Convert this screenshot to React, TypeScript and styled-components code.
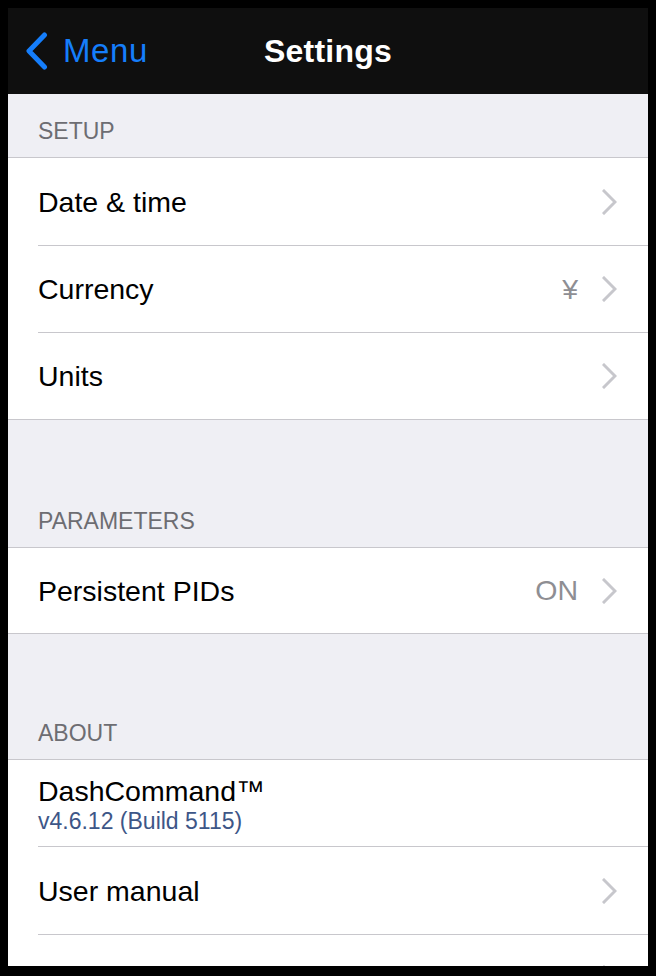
import React from "react";
import styled, { createGlobalStyle } from "styled-components";

const GlobalStyle = createGlobalStyle`
  html, body { background: #000; }
  body { margin: 8px; font-family: "Liberation Sans", Arial, sans-serif; }
`;

const Screen = styled.div`
  width: 640px;
  height: 958px;
  overflow: hidden;
  background: #efeff4;
  display: flex;
  flex-direction: column;
`;

const NavBar = styled.header`
  height: 86px;
  flex: none;
  background: #0f0f0f;
  display: grid;
  grid-template-columns: 1fr auto 1fr;
  align-items: center;
`;

const BackButton = styled.div`
  display: flex;
  align-items: center;
  gap: 15px;
  padding-left: 17px;
  color: #157efb;
  font-size: 33px;
  letter-spacing: 0.6px;
`;

const Title = styled.h1`
  margin: 0;
  color: #fff;
  font-size: 32px;
  font-weight: bold;
  letter-spacing: 0.2px;
`;

const SectionHeader = styled.div<{ $gap?: number }>`
  height: 63px;
  margin-top: ${(p) => p.$gap ?? 0}px;
  flex: none;
  box-sizing: border-box;
  display: flex;
  align-items: flex-end;
  padding: 0 0 13px 30px;
  color: #6d6d72;
  font-size: 23px;
  line-height: 26px;
`;

const Group = styled.div`
  background: #fff;
  border-top: 1px solid #c8c7cc;
  border-bottom: 1px solid #c8c7cc;
  flex: none;
`;

const Row = styled.div<{ $h?: number }>`
  height: ${(p) => p.$h ?? 87}px;
  box-sizing: border-box;
  display: flex;
  align-items: center;
  padding: 0 31px 0 30px;
  & + & {
    border-top: 1px solid #c8c7cc;
    margin-left: 30px;
    padding-left: 0;
  }
`;

const Label = styled.div`
  flex: 1;
  font-size: 28.5px;
  line-height: 32px;
  color: #000;
`;

const TwoLine = styled.div`
  flex: 1;
  align-self: flex-start;
  display: flex;
  flex-direction: column;
  gap: 1px;
  padding-top: 15px;
`;

const SubLabel = styled.div`
  font-size: 23px;
  line-height: 26px;
  color: #3d5687;
`;

const Value = styled.div`
  font-size: 28.5px;
  color: #8e8e93;
  margin-right: 24px;
`;

const Chevron = () => (
  <svg width="15" height="26" viewBox="0 0 15 26" fill="none">
    <path d="M2 2 L13 13 L2 24" stroke="#c7c7cc" strokeWidth="3" strokeLinecap="square" />
  </svg>
);

const BackChevron = () => (
  <svg width="23" height="38" viewBox="0 0 23 38" fill="none">
    <path d="M19.5 3 L4 19 L19.5 35" stroke="#157efb" strokeWidth="5" strokeLinecap="round" strokeLinejoin="round" />
  </svg>
);

type Item = { label: string; value?: string; sub?: string; chevron?: boolean; h?: number };

const Section = ({ title, items, gap }: { title: string; items: Item[]; gap?: number }) => (
  <>
    <SectionHeader $gap={gap}>{title}</SectionHeader>
    <Group>
      {items.map((it, i) => (
        <Row key={i} $h={it.h}>
          {it.sub ? (
            <TwoLine>
              <Label>{it.label}</Label>
              <SubLabel>{it.sub}</SubLabel>
            </TwoLine>
          ) : (
            <Label>{it.label}</Label>
          )}
          {it.value && <Value>{it.value}</Value>}
          {it.chevron && <Chevron />}
        </Row>
      ))}
    </Group>
  </>
);

export default function App() {
  return (
    <>
      <GlobalStyle />
      <Screen>
        <NavBar>
          <BackButton>
            <BackChevron />
            <span>Menu</span>
          </BackButton>
          <Title>Settings</Title>
          <div />
        </NavBar>
        <Section
          title="SETUP"
          items={[
            { label: "Date & time", chevron: true },
            { label: "Currency", value: "¥", chevron: true },
            { label: "Units", chevron: true },
          ]}
        />
        <Section
          gap={64}
          title="PARAMETERS"
          items={[{ label: "Persistent PIDs", value: "ON", chevron: true, h: 85 }]}
        />
        <Section
          gap={62}
          title="ABOUT"
          items={[
            { label: "DashCommand™", sub: "v4.6.12 (Build 5115)", h: 86 },
            { label: "User manual", chevron: true, h: 88 },
            { label: "", chevron: true },
          ]}
        />
      </Screen>
    </>
  );
}
